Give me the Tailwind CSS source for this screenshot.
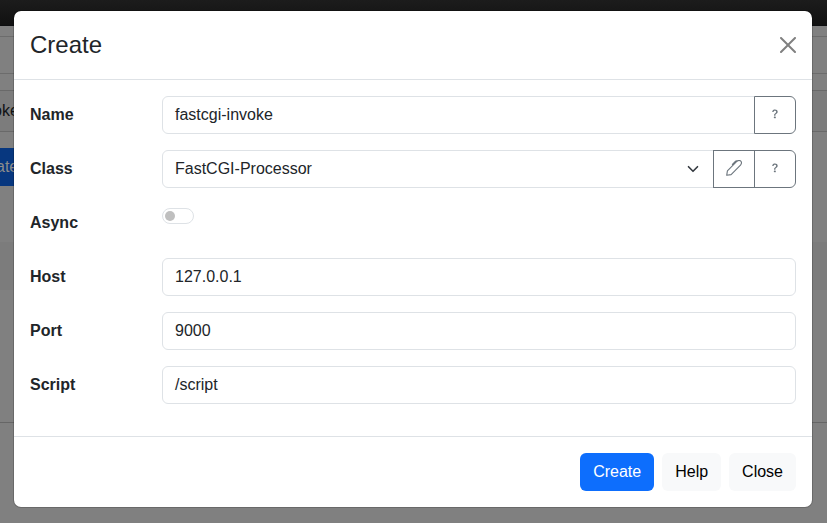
<!DOCTYPE html>
<html lang="en">
<head>
<meta charset="utf-8">
<title>Create</title>
<script src="https://cdn.jsdelivr.net/npm/@tailwindcss/browser@4"></script>
</head>
<body class="relative h-[523px] w-[827px] overflow-hidden bg-[#808080] font-['Liberation_Sans',Arial,sans-serif] text-base text-[#212529]">
<!-- dimmed page -->
<div class="flex h-full flex-col">
  <div class="h-[26px] shrink-0 border-b border-[#0d0e10] bg-linear-to-b from-[#1c1c1c] to-[#111111]"></div>
  <div class="mt-2.5 h-[38px] shrink-0 border-y border-[#6c6c6c]"></div>
  <div class="mt-4 flex h-[42px] shrink-0 items-center border-y border-[#696969] bg-[#7c7c7c] text-[#101214]"><span class="-ml-[7px]">oke</span></div>
  <div class="mt-4 flex h-[38px] w-7 shrink-0 items-center bg-[#07377f] text-[#8c8c8c]"><span class="-ml-[4px]">ate</span></div>
  <div class="mt-14 h-12 shrink-0 bg-[#7c7c7c]"></div>
  <div class="mt-[132px] h-px shrink-0 bg-[#666666]"></div>
</div>
<!-- dialog -->
<div role="dialog" class="absolute top-2.5 left-[13px] flex w-[800px] flex-col rounded-lg border border-black/[.175] bg-white bg-clip-padding">
  <div class="flex h-[69px] items-center justify-between border-b border-[#dee2e6] px-4">
    <h1 class="text-2xl leading-9">Create</h1>
    <svg class="size-4" viewBox="0 0 16 16" fill="#808080"><path d="M.293.293a1 1 0 0 1 1.414 0L8 6.586 14.293.293a1 1 0 1 1 1.414 1.414L9.414 8l6.293 6.293a1 1 0 0 1-1.414 1.414L8 9.414l-6.293 6.293a1 1 0 0 1-1.414-1.414L6.586 8 .293 1.707a1 1 0 0 1 0-1.414z"/></svg>
  </div>
  <div class="flex flex-col gap-4 px-4 pt-4 pb-8">
    <div class="flex h-[38px]">
      <div class="w-[132px] pt-[7px] font-bold">Name</div>
      <div class="flex flex-1">
        <div class="flex flex-1 items-center rounded-l-md border border-[#dee2e6] px-3">fastcgi-invoke</div>
        <div class="-ml-px flex w-[42px] items-center justify-center rounded-r-md border border-[#6c757d]"><svg class="-mt-0.5 size-4" viewBox="0 0 16 16" fill="#6c757d"><path d="M5.255 5.786a.237.237 0 0 0 .241.247h.825c.138 0 .248-.113.266-.25.09-.656.54-1.134 1.342-1.134.686 0 1.314.343 1.314 1.168 0 .635-.374.927-.965 1.371-.673.489-1.206 1.06-1.168 1.987l.003.217a.25.25 0 0 0 .25.246h.811a.25.25 0 0 0 .25-.25v-.105c0-.718.273-.927 1.01-1.486.609-.463 1.244-.977 1.244-2.056 0-1.511-1.276-2.241-2.673-2.241-1.267 0-2.655.59-2.75 2.286m1.557 5.763c0 .533.425.927 1.01.927.609 0 1.028-.394 1.028-.927 0-.552-.42-.94-1.029-.94-.584 0-1.009.388-1.009.94"/></svg></div>
      </div>
    </div>
    <div class="flex h-[38px]">
      <div class="w-[132px] pt-[7px] font-bold">Class</div>
      <div class="flex flex-1">
        <div class="flex flex-1 items-center justify-between rounded-l-md border border-[#dee2e6] px-3">FastCGI-Processor
          <svg class="mr-0.5 h-3 w-3" viewBox="0 0 16 16" fill="none" stroke="#343a40" stroke-width="2.2" stroke-linecap="round" stroke-linejoin="round"><path d="m2 5 6 6 6-6"/></svg></div>
        <div class="-ml-px flex w-[42px] items-center justify-center border border-[#6c757d]"><svg class="-mt-0.5 size-4" viewBox="0 0 16 16" fill="none" stroke="#6c757d" stroke-width="1.1" stroke-linejoin="round" stroke-linecap="round"><path d="M.7 15.3 1.4 10.8 10.8 1.4Q13.3-.4 14.8 1.2 16.3 2.8 14.5 5.2L5.1 14.6ZM6.4 4.4 9.6 1.1Q10.4.4 11.4 1.1"/></svg></div>
        <div class="-ml-px flex w-[42px] items-center justify-center rounded-r-md border border-[#6c757d]"><svg class="-mt-0.5 size-4" viewBox="0 0 16 16" fill="#6c757d"><path d="M5.255 5.786a.237.237 0 0 0 .241.247h.825c.138 0 .248-.113.266-.25.09-.656.54-1.134 1.342-1.134.686 0 1.314.343 1.314 1.168 0 .635-.374.927-.965 1.371-.673.489-1.206 1.06-1.168 1.987l.003.217a.25.25 0 0 0 .25.246h.811a.25.25 0 0 0 .25-.25v-.105c0-.718.273-.927 1.01-1.486.609-.463 1.244-.977 1.244-2.056 0-1.511-1.276-2.241-2.673-2.241-1.267 0-2.655.59-2.75 2.286m1.557 5.763c0 .533.425.927 1.01.927.609 0 1.028-.394 1.028-.927 0-.552-.42-.94-1.029-.94-.584 0-1.009.388-1.009.94"/></svg></div>
      </div>
    </div>
    <div class="flex h-[38px]">
      <div class="w-[132px] pt-[7px] font-bold">Async</div>
      <div class="mt-1 flex h-4 w-8 items-center rounded-full border border-[#dee2e6] pl-[1.5px]"><span class="size-[10.5px] rounded-full bg-[#bfbfbf]"></span></div>
    </div>
    <div class="flex h-[38px]">
      <div class="w-[132px] pt-[7px] font-bold">Host</div>
      <div class="flex flex-1 items-center rounded-md border border-[#dee2e6] px-3">127.0.0.1</div>
    </div>
    <div class="flex h-[38px]">
      <div class="w-[132px] pt-[7px] font-bold">Port</div>
      <div class="flex flex-1 items-center rounded-md border border-[#dee2e6] px-3">9000</div>
    </div>
    <div class="flex h-[38px]">
      <div class="w-[132px] pt-[7px] font-bold">Script</div>
      <div class="flex flex-1 items-center rounded-md border border-[#dee2e6] px-3">/script</div>
    </div>
  </div>
  <div class="flex h-[71px] items-center justify-end gap-2 border-t border-[#dee2e6] px-4">
    <button class="h-[38px] rounded-md bg-[#0d6efd] px-[13px] text-white">Create</button>
    <button class="h-[38px] rounded-md bg-[#f8f9fa] px-[13px] text-black">Help</button>
    <button class="h-[38px] rounded-md bg-[#f8f9fa] px-[13px] text-black">Close</button>
  </div>
</div>
</body>
</html>
